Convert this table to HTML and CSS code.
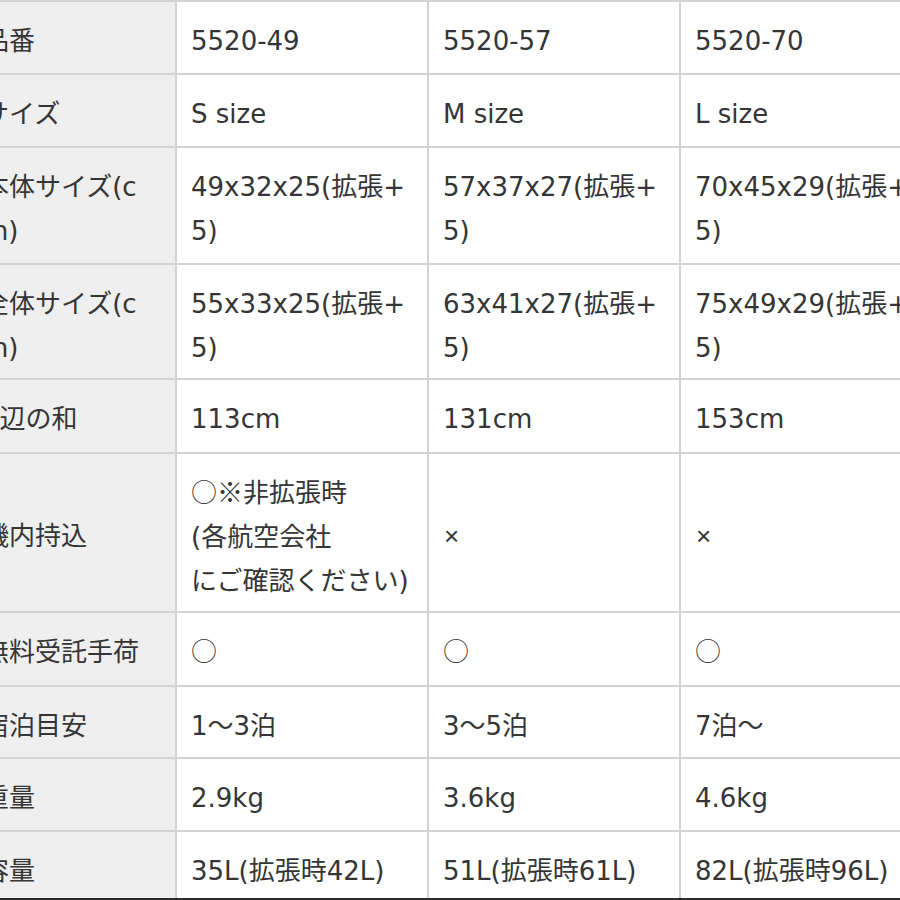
FILE: index.html
```html
<!DOCTYPE html>
<html lang="ja">
<head>
<meta charset="utf-8">
<title>スーツケース 仕様</title>
<link rel="stylesheet" href="styles.css">
</head>
<body>
<div class="frame">
  <div class="spec">
    <div class="cell label">品番</div>
    <div class="cell">5520-49</div>
    <div class="cell">5520-57</div>
    <div class="cell">5520-70</div>

    <div class="cell label">サイズ</div>
    <div class="cell">S size</div>
    <div class="cell">M size</div>
    <div class="cell">L size</div>

    <div class="cell label">本体サイズ(c<br>m)</div>
    <div class="cell">49x32x25(拡張+<br>5)</div>
    <div class="cell">57x37x27(拡張+<br>5)</div>
    <div class="cell">70x45x29(拡張+<br>5)</div>

    <div class="cell label">全体サイズ(c<br>m)</div>
    <div class="cell">55x33x25(拡張+<br>5)</div>
    <div class="cell">63x41x27(拡張+<br>5)</div>
    <div class="cell">75x49x29(拡張+<br>5)</div>

    <div class="cell label">3辺の和</div>
    <div class="cell">113cm</div>
    <div class="cell">131cm</div>
    <div class="cell">153cm</div>

    <div class="cell label mid">機内持込</div>
    <div class="cell"><span class="cjk">○※</span>非拡張時<br>(各航空会社<br>にご確認ください)</div>
    <div class="cell mid"><span class="cross">×</span></div>
    <div class="cell mid"><span class="cross">×</span></div>

    <div class="cell label">無料受託手荷</div>
    <div class="cell"><span class="cjk">○</span></div>
    <div class="cell"><span class="cjk">○</span></div>
    <div class="cell"><span class="cjk">○</span></div>

    <div class="cell label">宿泊目安</div>
    <div class="cell">1〜3泊</div>
    <div class="cell">3〜5泊</div>
    <div class="cell">7泊〜</div>

    <div class="cell label">重量</div>
    <div class="cell">2.9kg</div>
    <div class="cell">3.6kg</div>
    <div class="cell">4.6kg</div>

    <div class="cell label">容量</div>
    <div class="cell">35L(拡張時42L)</div>
    <div class="cell">51L(拡張時61L)</div>
    <div class="cell">82L(拡張時96L)</div>
  </div>
</div>
</body>
</html>
```
FILE: styles.css
```css
html, body {
  margin: 0;
  padding: 0;
  overflow: hidden;
  background: #ffffff;
}

.frame {
  height: 898px;
  overflow: hidden;
  border-bottom: 2px solid #2b2b2b;
}

.spec {
  display: grid;
  grid-template-columns: 206px repeat(3, 250px);
  grid-template-rows: 71px 71px 115px 113px 72px 157px 72px 70px 71px 71px;
  gap: 2px;
  padding: 2px;
  width: max-content;
  margin-left: -33px;
  background: #d3d3d3;
  font-family: "DejaVu Sans", "Noto Sans CJK JP", sans-serif;
  font-size: 26px;
  line-height: 44px;
  color: #353535;
}

.cell {
  background: #ffffff;
  padding: 17px 14px 0;
  white-space: nowrap;
  overflow: hidden;
}

.label {
  background: #efefef;
}

.mid {
  display: flex;
  align-items: center;
  padding-bottom: 10px;
}

.cjk {
  font-family: "Noto Sans CJK JP", sans-serif;
  font-weight: 300;
  line-height: 26px;
}

.cross {
  font-family: "Liberation Sans", sans-serif;
  line-height: 26px;
  padding-left: 1px;
}
```
